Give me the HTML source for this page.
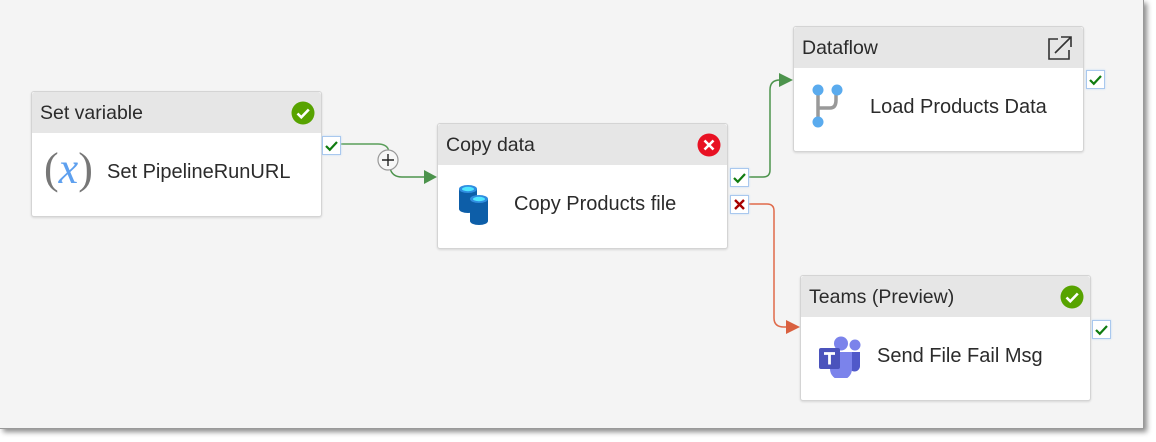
<!DOCTYPE html>
<html><head><style>
body{margin:0;width:1156px;height:442px;background:#fff;position:relative;overflow:hidden;font-family:"Liberation Sans","DejaVu Sans",sans-serif;}
.canvas{position:absolute;left:0;top:0;width:1143px;height:428px;background:#f4f4f4;box-shadow:3px 3px 5px rgba(0,0,0,.45);border-right:1px solid #999;border-bottom:1px solid #999;}
.box{position:absolute;width:289px;height:124px;background:#fff;border:1px solid #d4d4d4;border-radius:3px;box-shadow:0 1px 2px rgba(0,0,0,.12);}
.hd{height:41px;background:#e6e6e6;font-size:19.5px;color:#2b2b2b;line-height:43px;padding-left:8px;position:relative;border-radius:3px 3px 0 0;}
.bd{position:relative;height:83px;}
.lbl{position:absolute;font-size:20px;color:#2b2b2b;top:28px;}
.st{position:absolute;right:6px;top:9px;}
.cb{position:absolute;width:17px;height:17px;background:#fff;border:1px solid #a9c8ee;box-shadow:0 0 2px #c3dcf7;}
.cb svg{position:absolute;left:1px;top:1px;}
svg.lines{position:absolute;left:0;top:0;}
</style></head><body>
<div class="canvas"></div>
<svg class="lines" width="1156" height="442">
<path d="M340 144 H378 Q388 144 389 152" fill="none" stroke="#5a9e5a" stroke-width="1.5"/>
<path d="M390 168 Q392 177 402 177 H424" fill="none" stroke="#4c934c" stroke-width="1.5"/>
<polygon points="424,170 437,177 424,184" fill="#4c934c"/>
<circle cx="388" cy="160" r="10" fill="#f7f7f7" stroke="#999" stroke-width="1.2"/>
<path d="M382 160 H394 M388 154 V166" stroke="#222" stroke-width="1.4"/>
<path d="M747 177 H763 Q770 177 770 170 V90 Q770 80 780 80" fill="none" stroke="#4c934c" stroke-width="1.5"/>
<polygon points="779,73 793,80 779,87" fill="#4c934c"/>
<path d="M747 204 H767 Q774 204 774 211 V318 Q774 327 784 327 H787" fill="none" stroke="#e06a4a" stroke-width="1.5"/>
<polygon points="786,320 800,327 786,334" fill="#d9603f"/>
</svg>

<div class="box" style="left:31px;top:91px">
 <div class="hd">Set variable<svg class="st" width="24" height="24"><circle cx="12" cy="12" r="11.5" fill="#57a300"/><path d="M6.5 12.5l3.8 3.8 7.5-7.8" fill="none" stroke="#fff" stroke-width="2.6"/></svg></div>
 <div class="bd">
  <div style="position:absolute;left:12px;top:10px;font-size:44px;color:#777;font-family:'Liberation Serif',serif;">(<span style="color:#5ea0ef;font-style:italic;">x</span>)</div>
  <div class="lbl" style="left:75px">Set PipelineRunURL</div>
 </div>
</div>
<div class="cb" style="left:322px;top:136px"><svg width="15" height="15"><path d="M2 8l3.8 3.8L13 4" fill="none" stroke="#107c10" stroke-width="2.2"/></svg></div>

<div class="box" style="left:437px;top:123px">
 <div class="hd">Copy data<svg class="st" width="24" height="24"><circle cx="12" cy="12" r="11.5" fill="#e81123"/><path d="M7.5 7.5l9 9M16.5 7.5l-9 9" stroke="#fff" stroke-width="2.6"/></svg></div>
 <div class="bd">
  <svg style="position:absolute;left:20px;top:18px" width="40" height="44">
   <path d="M1 6 V26 a9 4 0 0 0 18 0 V6z" fill="#0d5ea8"/><ellipse cx="10" cy="6" rx="9" ry="4" fill="#2f8de0"/><ellipse cx="10" cy="6" rx="6" ry="2.2" fill="#50e6ff"/>
   <path d="M12 16 V38 a9 4 0 0 0 18 0 V16z" fill="#0d5ea8"/><ellipse cx="21" cy="16" rx="9" ry="4" fill="#2f8de0"/><ellipse cx="21" cy="16" rx="6" ry="2.2" fill="#50e6ff"/>
  </svg>
  <div class="lbl" style="left:76px">Copy Products file</div>
 </div>
</div>
<div class="cb" style="left:730px;top:168px"><svg width="15" height="15"><path d="M2 8l3.8 3.8L13 4" fill="none" stroke="#107c10" stroke-width="2.2"/></svg></div>
<div class="cb" style="left:730px;top:195px"><svg width="15" height="15"><path d="M3 3l9 9M12 3l-9 9" stroke="#a80000" stroke-width="2.4"/></svg></div>

<div class="box" style="left:793px;top:26px">
 <div class="hd">Dataflow<svg class="st" style="top:8px;right:10px" width="26" height="26"><path d="M14 2H24V12M24 2L8 18M11 4H2V24H22V15" fill="none" stroke="#333" stroke-width="1.6"/></svg></div>
 <div class="bd">
  <svg style="position:absolute;left:16px;top:16px" width="34" height="46">
   <path d="M8 6 V38 M8 24 H20 Q26 24 26 16 V6" fill="none" stroke="#999" stroke-width="3.5"/>
   <circle cx="8" cy="6" r="5.5" fill="#5aabee"/><circle cx="27" cy="6" r="5.5" fill="#5aabee"/><circle cx="8" cy="38" r="5.5" fill="#5aabee"/>
  </svg>
  <div class="lbl" style="left:76px">Load Products Data</div>
 </div>
</div>
<div class="cb" style="left:1086px;top:70px"><svg width="15" height="15"><path d="M2 8l3.8 3.8L13 4" fill="none" stroke="#107c10" stroke-width="2.2"/></svg></div>

<div class="box" style="left:800px;top:275px">
 <div class="hd">Teams (Preview)<svg class="st" width="24" height="24"><circle cx="12" cy="12" r="11.5" fill="#57a300"/><path d="M6.5 12.5l3.8 3.8 7.5-7.8" fill="none" stroke="#fff" stroke-width="2.6"/></svg></div>
 <div class="bd">
  <svg style="position:absolute;left:17px;top:19px" width="44" height="42">
   <circle cx="37" cy="9" r="5.5" fill="#7b83eb"/><path d="M31 16h11v14a5.5 5.5 0 0 1-11 0z" fill="#5059c9"/>
   <circle cx="23" cy="7.5" r="7" fill="#7b83eb"/><path d="M12 16h22v17a11 11 0 0 1-22 0z" fill="#7b83eb"/>
   <rect x="1" y="12" width="21" height="21" rx="2" fill="#4b53bc"/>
   <path d="M6 17.5h11M11.5 17.5v11" stroke="#fff" stroke-width="2.8"/>
  </svg>
  <div class="lbl" style="left:76px">Send File Fail Msg</div>
 </div>
</div>
<div class="cb" style="left:1092px;top:320px"><svg width="15" height="15"><path d="M2 8l3.8 3.8L13 4" fill="none" stroke="#107c10" stroke-width="2.2"/></svg></div>
</body></html>
